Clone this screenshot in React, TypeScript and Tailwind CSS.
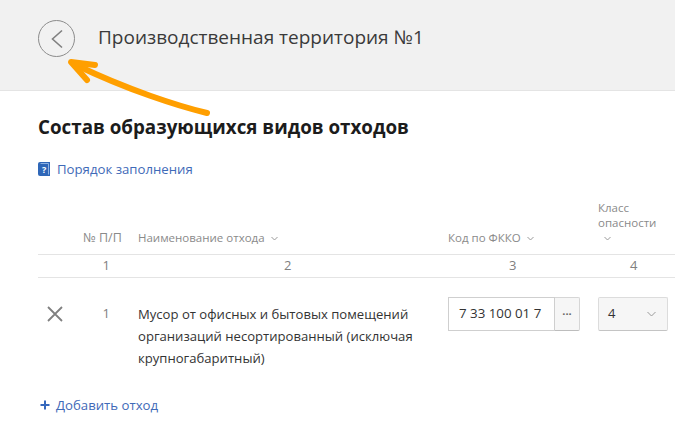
const font = { fontFamily: '"Open Sans", "Noto Sans", sans-serif' };

const Caret = () => (
  <svg width="7" height="5" viewBox="0 0 7 5" className="ml-1.5 inline-block" fill="none" stroke="#9a9a9a" strokeWidth="1">
    <path d="M0.5 1 L3.5 4 L6.5 1" />
  </svg>
);

const App = () => {
  return (
    <div className="relative h-[427px] w-[675px] overflow-hidden bg-white text-[#222]" style={font}>
      <header className="flex h-[91px] items-start gap-[23px] border-b border-[#e4e4e4] bg-[#f1f1f1] pl-[38px] pt-[20px]">
        <button className="flex h-[37px] w-[37px] items-center justify-center rounded-full border border-[#8c8c8c]">
          <svg width="14" height="20" viewBox="0 0 14 20" fill="none" stroke="#808080" strokeWidth="1.6">
            <path d="M12 1.5 L2.5 10 L12 18.5" />
          </svg>
        </button>
        <h2 className="mt-[3px] text-[19px] leading-[28px] text-[#3a3a3a]">Производственная территория №1</h2>
      </header>

      <main className="pl-[38px]">
        <h1 className="mt-[23px] text-[18.8px] font-bold leading-[27px] text-[#1c1c1c]">Состав образующихся видов отходов</h1>
        <a className="mt-[18px] flex items-center gap-[7px] text-[13.2px] leading-[20px] text-[#3f6ab8]">
          <svg width="12" height="14" viewBox="0 0 12 14">
            <path d="M2 0 H12 V14 H2 Q0 14 0 12 V2 Q0 0 2 0 Z" fill="#2f67b8" />
            <path d="M2.5 1.5 H10.5 V12.5" fill="none" stroke="#8fb2e2" strokeWidth="1" />
            <text x="6.2" y="10.5" fontSize="9" fontWeight="700" textAnchor="middle" fill="#fff">?</text>
          </svg>
          Порядок заполнения
        </a>

        <div className="mt-[21px] grid grid-cols-[100px_310px_150px_1fr] items-end border-b border-[#e4e4e4] pb-[9px] text-[11.5px] leading-[15px] text-[#8a8a8a]">
          <div className="pl-[45px] text-[12.5px]">№ П/П</div>
          <div>Наименование отхода<Caret /></div>
          <div>Код по ФККО<Caret /></div>
          <div>Класс<br />опасности<br /><Caret /></div>
        </div>
        <div className="grid h-[23px] grid-cols-[100px_310px_150px_1fr] items-center border-b border-[#e4e4e4] text-[13px] text-[#808080]">
          <div className="pl-[64.4px]">1</div>
          <div className="pl-[146px]">2</div>
          <div className="pl-[61px]">3</div>
          <div className="pl-[32px]">4</div>
        </div>

        <div className="mt-[19px] grid grid-cols-[100px_310px_150px_1fr] items-start">
          <div className="flex h-[34px] items-center">
            <svg width="18" height="18" viewBox="0 0 18 18" className="ml-[8px]" fill="none" stroke="#808080" strokeWidth="1.8">
              <path d="M2 2 L16 16 M16 2 L2 16" />
            </svg>
            <span className="ml-[38.4px] text-[13px] text-[#808080]">1</span>
          </div>
          <div className="pt-[6px] text-[13.1px] leading-[22px] text-[#333]">
            Мусор от офисных и бытовых помещений<br />
            организаций несортированный (исключая<br />
            крупногабаритный)
          </div>
          <div className="flex h-[34px] w-[132px]">
            <div className="flex flex-1 items-center border border-[#cfcfcf] pl-[10px] text-[13.3px] text-[#333]">7 33 100 01 7</div>
            <div className="flex w-[25px] items-center justify-center rounded-r-[2px] border border-l-0 border-[#d6d6d6] border-b-[#bdbdbd] bg-[#f6f6f6] pb-[7px] text-[11px] font-bold leading-none text-[#666]">...</div>
          </div>
          <div className="flex h-[34px] w-[70px] items-center justify-between rounded-[2px] border border-[#dcdcdc] border-b-[#c4c4c4] bg-[#f6f6f6] pl-[9px] pr-[11px] text-[13px] text-[#333]">
            4
            <svg width="9" height="6" viewBox="0 0 9 6" fill="none" stroke="#9a9a9a" strokeWidth="1">
              <path d="M0.5 1 L4.5 5 L8.5 1" />
            </svg>
          </div>
        </div>

        <a className="mt-[26px] flex items-center gap-[6px] text-[13.2px] leading-[20px] text-[#3f6ab8]">
          <svg width="10" height="10" viewBox="0 0 10 10" stroke="#3568bd" strokeWidth="2" className="ml-[2px]">
            <path d="M5 0.5 V9.5 M0.5 5 H9.5" />
          </svg>
          Добавить отход
        </a>
      </main>

      <svg className="absolute left-0 top-0" width="230" height="130" viewBox="0 0 230 130" fill="none" stroke="#ff9f00" strokeWidth="6" strokeLinecap="round" strokeLinejoin="round">
        <path d="M207 113 C178 106 128 90 76 65" />
        <path d="M95 65 L71 62 L87 80" />
      </svg>
    </div>
  );
};

export default App;
